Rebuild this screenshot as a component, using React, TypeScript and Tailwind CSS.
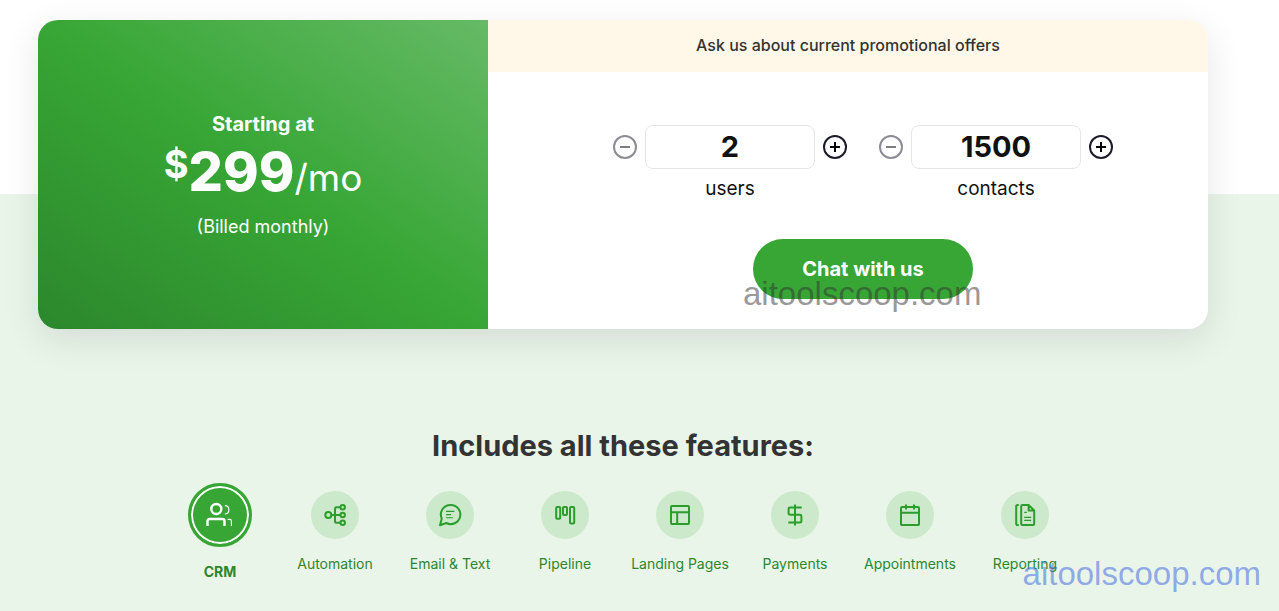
import { useState } from "react";
import type { ReactNode } from "react";

type Feature = { name: string; icon: ReactNode };

const features: Feature[] = [
  {
    name: "CRM",
    icon: (
      <>
        <circle cx="10.3" cy="8" r="5" />
        <path d="M1.5 25v-5a2 2 0 0 1 2-2h13a2 2 0 0 1 2 2v5" />
        <path d="M18.8 4.6c2.4.1 4.1 1.6 4.1 4.1s-1.7 4.2-4.1 4.3M21.6 18.4h2.2a1.6 1.6 0 0 1 1.6 1.6v5" strokeWidth="1.1" />
      </>
    ),
  },
  {
    name: "Automation",
    icon: (
      <>
        <circle cx="5.3" cy="12" r="3" />
        <circle cx="19.7" cy="4.3" r="2.2" />
        <circle cx="19.7" cy="12" r="2.2" />
        <circle cx="19.7" cy="19.7" r="2.2" />
        <path d="M8.3 12h9.2M17.5 4.3h-4a1.5 1.5 0 0 0-1.5 1.5v12.4a1.5 1.5 0 0 0 1.5 1.5h4" />
      </>
    ),
  },
  {
    name: "Email & Text",
    icon: (
      <>
        <path d="M12.7 1.9a9.6 9.6 0 1 1-4.4 18.1L2 22.2l1.8-6.6A9.6 9.6 0 0 1 12.7 1.9z" />
        <path d="M8 8.4h8.4M8 11.6h5M8 14.7h6.8" strokeWidth="1.1" />
      </>
    ),
  },
  {
    name: "Pipeline",
    icon: (
      <>
        <rect x="3.2" y="4" width="4" height="11.8" rx="1" />
        <rect x="10" y="4" width="4" height="8" rx="1" />
        <rect x="17" y="4" width="4.2" height="16.4" rx="1" />
      </>
    ),
  },
  {
    name: "Landing Pages",
    icon: (
      <>
        <rect x="3" y="3" width="18" height="18" rx="1" />
        <path d="M3 9.2h18M9.2 9.2v11.8" />
      </>
    ),
  },
  {
    name: "Payments",
    icon: <path d="M12 1.5v21M18.7 4.4H7A1.4 1.4 0 0 0 5.6 5.8v4.6A1.4 1.4 0 0 0 7 11.8h10a1.4 1.4 0 0 1 1.4 1.4v5a1.4 1.4 0 0 1-1.4 1.4H5.3" />,
  },
  {
    name: "Appointments",
    icon: (
      <>
        <rect x="3" y="4.1" width="18" height="18" rx="1.2" />
        <path d="M3 9.8h18M8 1.5v5M16 1.5v5" />
      </>
    ),
  },
  {
    name: "Reporting",
    icon: (
      <>
        <path d="M5.8 1.9H4.6a1.4 1.4 0 0 0-1.4 1.4v17.4a1.4 1.4 0 0 0 1.4 1.4h1.2" />
        <path d="M9.6 1.9h6l5.6 5.6v13.2a1.4 1.4 0 0 1-1.4 1.4H9.6a1.4 1.4 0 0 1-1.4-1.4V3.3a1.4 1.4 0 0 1 1.4-1.4zM15.6 1.9v5.6h5.6" />
        <path d="M11.2 9.4h2.6M11.2 14.4h7M11.2 17.4h7" strokeWidth="1.1" />
      </>
    ),
  },
];

function Stepper({ id, label, min, step }: { id: string; label: string; min: number; step: number }) {
  const [value, setValue] = useState(min);
  const round = "flex size-6 shrink-0 items-center justify-center rounded-full border-2 border-[#1c1b2b] disabled:opacity-50";
  return (
    <div className="flex flex-col items-center">
      <div className="flex items-center gap-2">
        <button type="button" aria-label={`Fewer ${label}`} disabled={value <= min} onClick={() => setValue(value - step)} className={round}>
          <svg viewBox="0 0 12 12" className="size-3" stroke="#000" strokeWidth="2">
            <path d="M1 6h10" />
          </svg>
        </button>
        <input
          id={id}
          type="text"
          inputMode="numeric"
          value={value}
          onChange={(e) => setValue(Number(e.target.value.replace(/\D/g, "")))}
          className="h-11 w-[170px] rounded-lg border border-[#e5e5e5] bg-white pb-0.5 text-center text-[29px] font-bold text-[#111]"
        />
        <button type="button" aria-label={`More ${label}`} onClick={() => setValue(value + step)} className={round}>
          <svg viewBox="0 0 12 12" className="size-3" stroke="#000" strokeWidth="2">
            <path d="M1 6h10M6 1v10" />
          </svg>
        </button>
      </div>
      <label htmlFor={id} className="mt-1 text-[19px] leading-8 text-[#111]">
        {label}
      </label>
    </div>
  );
}

export default function App() {
  const [active, setActive] = useState("CRM");
  return (
    <div className="relative min-h-screen overflow-hidden bg-[linear-gradient(#fff_194px,#eaf5ea_194px)] pt-5 pr-[33px] font-['Inter',sans-serif]">
      <section className="mx-auto flex w-full max-w-[1170px] overflow-hidden rounded-[20px] bg-white shadow-[0_10px_36px_rgba(0,0,0,0.1)]">
        <div className="flex w-[450px] shrink-0 flex-col items-center justify-center bg-[linear-gradient(to_top_right,#2c872c,#37a635_50%,#66ba66)] pt-0.5 text-white">
          <p className="text-xl leading-7 font-bold">Starting at</p>
          <p className="flex h-[75px] items-start">
            <span className="text-[38px] leading-[52px] font-bold">$</span>
            <span className="text-[54px] leading-[67px] font-extrabold">299</span>
            <span className="text-[37px] leading-[80px]">/mo</span>
          </p>
          <p className="text-lg leading-7">(Billed monthly)</p>
        </div>
        <div className="flex-1">
          <p className="bg-[#fff8e8] pt-[13px] pb-[15px] text-center text-base leading-6 font-medium text-[#333]">
            Ask us about current promotional offers
          </p>
          <div className="flex flex-col items-center pt-[53px] pb-[30px] pl-[30px]">
            <div className="flex gap-8">
              <Stepper id="users" label="users" min={2} step={1} />
              <Stepper id="contacts" label="contacts" min={1500} step={500} />
            </div>
            <div className="relative mt-[34px]">
              <button type="button" className="h-[60px] w-[220px] rounded-full bg-[#37a635] text-xl font-bold text-white">
                Chat with us
              </button>
              <span className="pointer-events-none absolute top-[35px] -left-[10px] font-['Liberation_Sans',sans-serif] text-[33px] leading-10 text-[#333]/50">
                aitoolscoop.com
              </span>
            </div>
          </div>
        </div>
      </section>

      <section className="mx-auto mt-[97px] w-full max-w-[920px]">
        <h2 className="text-center text-[29px] leading-10 font-bold text-[#333]">Includes all these features:</h2>
        <div role="tablist" className="mt-[17px] grid grid-cols-8">
          {features.map(({ name, icon }) => {
            const on = name === active;
            return (
              <button
                key={name}
                type="button"
                role="tab"
                aria-selected={on}
                onClick={() => setActive(name)}
                className={`flex flex-col items-center pr-px text-sm whitespace-nowrap ${on ? "font-bold text-[#2c872c]" : "pt-2 text-[#2c872c]"}`}
              >
                <span
                  className={`flex items-center justify-center rounded-full ${
                    on
                      ? "size-16 border-3 border-[#37a635] bg-[#37a635] text-white shadow-[inset_0_0_0_2px_#fff]"
                      : "size-12 bg-[#cce9cc] text-[#2a9d2a]"
                  }`}
                >
                  <svg
                    viewBox={name === "CRM" ? "0 0 28 28" : "0 0 24 24"}
                    className={name === "CRM" ? "size-7" : "size-6"}
                    fill="none"
                    stroke="currentColor"
                    strokeWidth={name === "CRM" ? "2.4" : "2"}
                    strokeLinejoin="round"
                  >
                    {icon}
                  </svg>
                </span>
                <span className="mt-[15px]">{name}</span>
              </button>
            );
          })}
        </div>
      </section>

      <span className="pointer-events-none absolute right-[18px] bottom-[17px] font-['Liberation_Sans',sans-serif] text-[33px] leading-10 text-[#4169e1]/55">
        aitoolscoop.com
      </span>
    </div>
  );
}
